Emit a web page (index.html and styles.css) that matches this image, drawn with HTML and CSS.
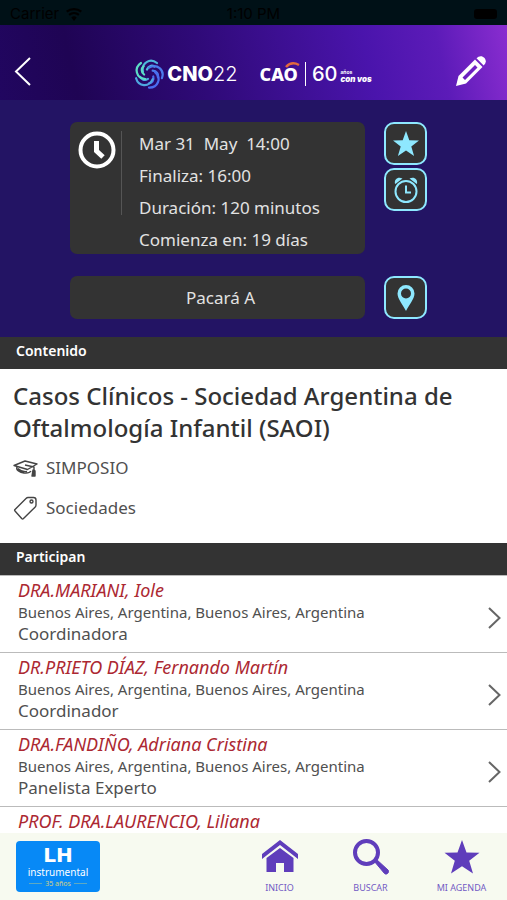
FILE: index.html
```html
<!DOCTYPE html>
<html lang="es">
<head>
<meta charset="utf-8">
<meta name="viewport" content="width=device-width, initial-scale=1">
<title>Casos Clínicos</title>
<link rel="stylesheet" href="styles.css">
</head>
<body>
<div class="status">
  <span class="carrier">Carrier
    <svg width="18" height="14" viewBox="0 0 18 14"><path d="M9 14 6.300 10.500a4 4 0 0 1 5.400 0zM4.800 8.800a6.500 6.500 0 0 1 8.400 0l1.400-1.800a9 9 0 0 0-11.200 0zM2.400 5.600a10.500 10.500 0 0 1 13.200 0L17 3.800a13 13 0 0 0-16 0z"/></svg>
  </span>
  <span>1:10 PM</span>
  <span class="battery"></span>
</div>
<header class="top">
  <button class="plain" aria-label="Volver"><svg width="18" height="30" viewBox="0 0 18 30" fill="none" stroke="#fff" stroke-width="2"><path d="M16 2 2 15.500 16 29"/></svg></button>
  <div class="brand">
    <svg class="swirl" width="30" height="30" viewBox="0 0 30 30" fill="none" stroke-width="2.200" stroke-linecap="round">
      <defs><path id="blade" d="M9 13C7 4 16-1.500 23 4M13 10.500C14.500 6.500 18 6 20.500 7.500"/></defs>
      <use href="#blade" stroke="#4fb8dc"/>
      <use href="#blade" stroke="#4b7cec" transform="rotate(72 15 15)"/>
      <use href="#blade" stroke="#4a6cf0" transform="rotate(144 15 15)"/>
      <use href="#blade" stroke="#4fa8e0" transform="rotate(216 15 15)"/>
      <use href="#blade" stroke="#5cdcc6" transform="rotate(288 15 15)"/>
    </svg>
    <span class="cno">CNO<span class="thin">22</span></span>
    <span class="cao">CAO<svg class="arc" width="15" height="6" viewBox="0 0 15 6"><path d="M1 5C5 .5 10 .8 14 3" fill="none" stroke="#e2683c" stroke-width="2.500"/></svg></span>
    <span class="sixty">60</span>
    <span class="convos"><span>años</span><b>con vos</b></span>
  </div>
  <button class="plain" aria-label="Editar"><svg width="30" height="30" viewBox="0 0 30 30" fill="#fff"><path d="m0 30 2.500-10L19 3.500l7.500 7.500L10 27.500zM6.500 21.500l2.500 2.500L21.500 11.500 19 9z" fill-rule="evenodd"/><path d="M20.500 2.300 22.500.8c4-2.500 9 2.500 6.700 6.700L27.700 9.500z"/></svg></button>
</header>
<main>
  <section class="hero">
    <div class="card">
      <svg class="clock" width="38" height="38" viewBox="0 0 38 38" fill="none" stroke="#fff" stroke-width="4"><circle cx="19" cy="19" r="16.500"/><path d="M18.500 10v10l6.500 6" stroke-width="5"/></svg>
      <div class="times"><span>Mar 31&nbsp; May&nbsp; 14:00</span><span>Finaliza: 16:00</span><span>Duración: 120 minutos</span><span>Comienza en: 19 días</span></div>
    </div>
    <div class="actions">
      <button class="tile" aria-label="Agregar a mi agenda"><svg width="26" height="26" viewBox="0 0 26 26" fill="#8ee8ff"><path d="m13 0 3.300 9.300 9.700.2-7.700 6 2.800 9.500L13 19.500 4.900 25l2.800-9.500-7.700-6 9.700-.2z"/></svg></button>
      <button class="tile" aria-label="Crear alarma"><svg width="26" height="28" viewBox="0 0 26 28" fill="none" stroke="#8ee8ff" stroke-width="2"><circle cx="13" cy="15.500" r="10.500"/><path d="M13 9.500v7h5"/><path d="M2 8C1 3 5 .5 9.500 2.500L3 7.500zM24 8c1-5-3-7.500-7.500-5.500l6.500 5z" fill="#8ee8ff" stroke="none"/></svg></button>
    </div>
    <div class="card room">Pacará A</div>
    <button class="tile" aria-label="Ubicación"><svg width="18" height="26" viewBox="0 0 18 26"><path fill="#8ee8ff" fill-rule="evenodd" d="M9 0a8.500 8.500 0 0 1 8.500 8.500C17.500 14 12 20 9 26 6 20 .5 14 .5 8.500A8.500 8.500 0 0 1 9 0zm0 3.500a5 5 0 1 0 0 10 5 5 0 0 0 0-10z"/></svg></button>
  </section>
  <h2 class="bar">Contenido</h2>
  <section class="content">
    <h1>Casos Clínicos - Sociedad Argentina de Oftalmología Infantil (SAOI)</h1>
    <p class="meta"><svg width="25" height="24" viewBox="0 0 25 24" fill="none" stroke="#444" stroke-width="1.400" stroke-linejoin="round"><path d="M1 9.500 12 5l12 3-9.500 5.500zM4 11c-1.500 3 3 5.500 7 6 3 .3 6-.3 7-2M5 12.500c2 2 6 3.500 9 3M12 9l9 2v5"/><path d="m20 14-1 6h3v-5z" fill="#444"/></svg>SIMPOSIO</p>
    <p class="meta"><svg width="25" height="24" viewBox="0 0 25 24" fill="none" stroke="#444" stroke-width="1.400" stroke-linejoin="round"><path d="m2 13.500 11-11c.7-.7 1.300-1 2-1h5.500a2.500 2.500 0 0 1 2.500 2.500v5c0 1-.3 1.500-1 2.200L10.500 22.500c-.6.600-1.200.6-1.800 0L2 15c-.5-.5-.5-1 0-1.500z"/><circle cx="18.500" cy="5.500" r="1.500"/></svg>Sociedades</p>
  </section>
  <h2 class="bar">Participan</h2>
  <ul class="people">
    <li><a href="#"><span class="who"><em>DRA.MARIANI, Iole</em><small>Buenos Aires, Argentina, Buenos Aires, Argentina</small><span>Coordinadora</span></span><svg width="13" height="22" viewBox="0 0 13 22"><path d="m1 1 10.500 10L1 21"/></svg></a></li>
    <li><a href="#"><span class="who"><em>DR.PRIETO DÍAZ, Fernando Martín</em><small>Buenos Aires, Argentina, Buenos Aires, Argentina</small><span>Coordinador</span></span><svg width="13" height="22" viewBox="0 0 13 22"><path d="m1 1 10.500 10L1 21"/></svg></a></li>
    <li><a href="#"><span class="who"><em>DRA.FANDIÑO, Adriana Cristina</em><small>Buenos Aires, Argentina, Buenos Aires, Argentina</small><span>Panelista Experto</span></span><svg width="13" height="22" viewBox="0 0 13 22"><path d="m1 1 10.500 10L1 21"/></svg></a></li>
    <li><a href="#"><span class="who"><em>PROF. DRA.LAURENCIO, Liliana</em></span></a></li>
  </ul>
</main>
<footer class="tabs">
  <a class="sponsor" href="#"><b>LH</b><span>instrumental</span><small>35 años</small></a>
  <nav>
    <a href="#"><svg width="36" height="36" viewBox="0 0 36 36"><path d="M18 1 36 15v5L18 6 0 20v-5zM18 9l13.500 10v14H22V24h-8v9H4.500V19z"/></svg>INICIO</a>
    <a href="#"><svg width="36" height="36" viewBox="0 0 36 36"><circle cx="13.500" cy="13.500" r="11.500" fill="none" stroke="#5f3dbb" stroke-width="4"/><path d="m21 22 2-2 12 11c2 2-1.500 5.500-3.500 3.500z" stroke="#5f3dbb"/></svg>BUSCAR</a>
    <a href="#"><svg width="36" height="36" viewBox="0 0 36 36"><path d="m18 1 4.500 12.500 13 .3-10.300 8L29 34.500l-11-7.300-11 7.300 3.800-12.700L.5 13.800l13-.3z"/></svg>MI AGENDA</a>
  </nav>
</footer>
</body>
</html>
```

FILE: styles.css
```css
* { box-sizing: border-box; }
body {
  margin: 0;
  height: 100vh;
  display: flex;
  flex-direction: column;
  font-family: "Noto Sans", sans-serif;
  color: #505050;
  background: #fff;
}
h1, h2, p, ul { margin: 0; padding: 0; }
a { color: inherit; text-decoration: none; }
button { padding: 0; cursor: pointer; }
.status {
  display: grid;
  grid-template-columns: 1fr auto 1fr;
  align-items: center;
  height: 25px;
  padding: 2px 10px 0;
  background: #001117;
  color: #000;
  font: 15px Inter, sans-serif;
}
.carrier { display: flex; align-items: center; gap: 6px; }
.battery { justify-self: end; width: 23px; height: 10px; border-radius: 3px; background: #000; }
.top {
  display: flex;
  align-items: center;
  justify-content: space-between;
  height: 75px;
  padding: 16px 21px 0 14px;
  background: linear-gradient(78deg, #210660 0%, #1f0454 15%, #2f0a78 40%, #4a14ac 72%, #5c1bb8 86%, #8a2dd0 100%);
}
.plain { display: flex; border: 0; background: none; }
.brand { display: flex; align-items: center; color: #fff; margin: 6px -18px 0 0; }
.swirl { margin-right: 3px; }
.cno { font: 800 20px/30px Inter, sans-serif; margin-right: 22px; }
.thin { font-weight: 300; }
.cao { position: relative; font: 800 18px/24px "Noto Sans", sans-serif; padding-right: 7px; border-right: 1px solid #fff; margin-right: 6px; }
.arc { position: absolute; right: 5px; top: 0; }
.sixty { font: 500 20px/24px Inter, sans-serif; margin-right: 3px; }
.convos { display: flex; flex-direction: column; font: 700 5px/5px Inter, sans-serif; padding-top: 6px; }
.convos b { font-size: 8px; line-height: 8px; font-style: italic; }
main { flex: 1; min-height: 0; overflow: hidden; }
.hero {
  display: grid;
  grid-template-columns: minmax(0, 295px) 43px;
  justify-content: center;
  gap: 22px 19px;
  padding: 22px 10px 18px 0;
  background: #231464;
}
.card {
  display: flex;
  background: #333;
  border-radius: 7px;
  color: #e2e2e2;
  font-size: 17px;
}
.clock { margin: 9px 0 0 8px; }
.times { position: relative; display: flex; flex-direction: column; padding: 6px 0 0 23px; line-height: 32px; }
.times::before { content: ""; position: absolute; left: 5px; top: 9px; height: 84px; border-left: 1px solid #555; }
.card:first-child { height: 132px; }
.room { justify-content: center; align-items: center; padding-left: 6px; }
.actions { display: flex; flex-direction: column; gap: 3px; }
.tile {
  display: flex;
  align-items: center;
  justify-content: center;
  width: 43px;
  height: 43px;
  border: 2px solid #8ee8ff;
  border-radius: 10px;
  background: #333;
}
.bar { height: 32px; padding-left: 16px; background: #333; color: #fff; font-size: 14px; font-weight: 600; line-height: 28px; }
.content { padding: 11px 13px 15px; }
h1 { font-size: 24px; line-height: 32px; font-weight: 500; color: #333; }
.meta { display: flex; align-items: center; gap: 8px; height: 40px; font-size: 17px; line-height: 24px; }
.content h1 + .meta { margin-top: 4px; }
.people { list-style: none; border-top: 1px solid #bbb; }
.people li + li { border-top: 1px solid #bbb; }
.people a { display: flex; align-items: center; justify-content: space-between; height: 76px; padding: 5px 6px 0 18px; }
.people li:last-child a { height: auto; }
.people svg { fill: none; stroke: #666; stroke-width: 2; margin-top: 2px; }
.who { display: flex; flex-direction: column; align-self: flex-start; font-size: 17px; line-height: 21px; }
.who em { color: #ac2832; font-size: 18px; line-height: 18px; margin-bottom: 2px; }
.who small { font-size: 15px; line-height: 22px; }
.tabs { display: flex; justify-content: space-between; height: 67px; padding: 0 0 0 16px; background: #f7faf0; }
.sponsor {
  display: flex;
  flex-direction: column;
  align-items: center;
  width: 84px;
  height: 51px;
  margin-top: 8px;
  padding-top: 3px;
  border-radius: 4px;
  background: #0789f6;
  color: #fff;
  font-size: 10px;
  line-height: 13px;
}
.sponsor b { font: 700 20px/22px "DejaVu Sans", sans-serif; }
.sponsor small { display: flex; align-items: center; gap: 3px; font-size: 7px; line-height: 9px; color: #d6d184; }
.sponsor small::before, .sponsor small::after { content: ""; width: 13px; border-top: 1px solid #5fa9c0; }
nav { display: flex; }
nav a { display: flex; flex-direction: column; align-items: center; width: 91px; padding-top: 6px; color: #735bc4; font-size: 9px; line-height: 12px; gap: 7px; }
nav svg { fill: #5f3dbb; }
```
